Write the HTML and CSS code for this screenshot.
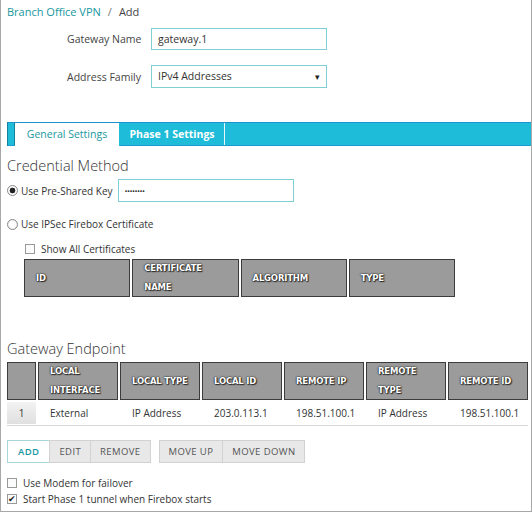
FILE: index.html
```html
<!DOCTYPE html>
<html>
<head>
<meta charset="utf-8">
<link rel="stylesheet" href="styles.css">
</head>
<body>
<div class="page">
  <div class="crumbs"><a class="crumb-link">Branch Office VPN</a><span class="sep">/</span><span class="crumb-cur">Add</span></div>

  <div class="form">
    <div class="form-row">
      <label class="form-label">Gateway Name</label>
      <div class="field">gateway.1</div>
    </div>
    <div class="form-row row2">
      <label class="form-label">Address Family</label>
      <div class="field select">IPv4 Addresses<span class="caret">▾</span></div>
    </div>
  </div>

  <div class="tabs">
    <div class="tab-lead"></div>
    <div class="tab active">General Settings</div>
    <div class="tab">Phase 1 Settings</div>
    <div class="tab-rest"></div>
  </div>

  <h2 class="section-title first">Credential Method</h2>
  <div class="opt-row psk">
    <span class="radio checked"></span><span class="opt-label">Use Pre-Shared Key</span>
    <div class="field pwd">••••••••</div>
  </div>
  <div class="opt-row ipsec">
    <span class="radio"></span><span class="opt-label">Use IPSec Firebox Certificate</span>
  </div>
  <div class="opt-row showall">
    <span class="check"></span><span class="opt-label">Show All Certificates</span>
  </div>

  <div class="grid cert-grid">
    <div class="th">ID</div>
    <div class="th">CERTIFICATE<br>NAME</div>
    <div class="th">ALGORITHM</div>
    <div class="th">TYPE</div>
  </div>

  <h2 class="section-title second">Gateway Endpoint</h2>
  <div class="grid ep-grid">
    <div class="th"></div>
    <div class="th">LOCAL<br>INTERFACE</div>
    <div class="th">LOCAL TYPE</div>
    <div class="th">LOCAL ID</div>
    <div class="th">REMOTE IP</div>
    <div class="th">REMOTE<br>TYPE</div>
    <div class="th">REMOTE ID</div>
  </div>
  <div class="grid ep-grid ep-row">
    <div class="td idx">1</div>
    <div class="td">External</div>
    <div class="td">IP Address</div>
    <div class="td">203.0.113.1</div>
    <div class="td">198.51.100.1</div>
    <div class="td">IP Address</div>
    <div class="td">198.51.100.1</div>
  </div>

  <div class="buttons">
    <div class="btn-group">
      <button class="btn primary">ADD</button><button class="btn">EDIT</button><button class="btn">REMOVE</button>
    </div>
    <div class="btn-group">
      <button class="btn">MOVE UP</button><button class="btn">MOVE DOWN</button>
    </div>
  </div>

  <div class="checks">
    <div class="opt-row"><span class="check"></span><span class="opt-label">Use Modem for failover</span></div>
    <div class="opt-row"><span class="check checked">✔</span><span class="opt-label">Start Phase 1 tunnel when Firebox starts</span></div>
  </div>
</div>
</body>
</html>
```

FILE: styles.css
```css
* { box-sizing: border-box; }
html, body { margin: 0; padding: 0; background: #fff; }
body {
  font-family: "Open Sans", "Liberation Sans", sans-serif;
  font-size: 10px;
  color: #333;
}
.page {
  width: 532px;
  height: 512px;
  border-left: 1px solid #a8a8a8;
  border-right: 1px solid #a8a8a8;
  border-bottom: 1px solid #a8a8a8;
  padding: 4px 0 0 6px;
  overflow: hidden;
}
.crumbs { line-height: 16px; font-size: 11px; }
.crumb-link { color: #17979f; }
.sep { color: #777; margin: 0 7px; }
.crumb-cur { color: #444; }

.form { margin-top: 8px; }
.form-row { display: flex; align-items: center; height: 22px; }
.form-row.row2 { margin-top: 15px; height: 23px; }
.form-label { width: 84px; margin-left: 60px; color: #444; font-size: 10.5px; }
.field {
  width: 176px;
  height: 22px;
  border: 1px solid #7fd0d6;
  padding: 0 6px;
  line-height: 20px;
  color: #333;
  background: #fff;
  font-size: 10.5px;
}
.select { height: 23px; line-height: 21px; display: flex; justify-content: space-between; }
.caret { font-size: 9px; color: #222; }

.tabs {
  margin-top: 34px;
  height: 24px;
  display: flex;
  background: #1ebcd8;
  border-top: 1px solid #1a92cf;
  border-bottom: 1px solid #1a9ccf;
  border-left: 1px solid #13829a;
  margin-right: -1px;
}
.tab-lead { width: 7px; border-right: 1px solid #13829a; }
.tab {
  width: 105px;
  text-align: center;
  line-height: 22px;
  color: #fff;
  font-weight: 700;
  font-size: 10.5px;
  border-right: 1px solid #e8f7fa;
}
.tab.active {
  background: #fff;
  color: #1a979f;
  font-weight: 400;
  margin-bottom: -1px;
  border-right: 1px solid #1ebcd8;
}
.tab-rest { flex: 1; }

.section-title {
  font-weight: 300;
  font-size: 14.5px;
  line-height: 22px;
  margin: 0;
  color: #333;
}
.section-title.first { margin-top: 9px; }
.section-title.second { margin-top: 41px; }

.opt-row { display: flex; align-items: center; height: 16px; font-size: 10px; }
.opt-row.psk { margin-top: 2px; height: 23px; }
.opt-row.ipsec { margin-top: 14px; }
.opt-row.showall { margin-top: 9px; padding-left: 18px; }
.opt-label { color: #333; }
.psk .field { width: 176px; margin-left: 5px; font-size: 8px; letter-spacing: -0.5px; height: 23px; line-height: 21px; }

.radio {
  width: 11px; height: 11px;
  border-radius: 50%;
  border: 1px solid #888;
  background: radial-gradient(circle, #fff 40%, #e4e4e4 100%);
  margin-right: 3px;
}
.radio.checked { background: radial-gradient(circle, #222 0, #222 2.6px, #fff 3.2px, #fff 4px, #ddd 100%); }
.check {
  width: 10px; height: 10px;
  border: 1px solid #999;
  background: #fbfbfb;
  margin-right: 6px;
  font-size: 9px;
  line-height: 8px;
  text-align: center;
  color: #222;
}

.grid { display: grid; column-gap: 2px; }
.cert-grid {
  margin-top: 2px;
  margin-left: 17px;
  width: 431px;
  grid-template-columns: repeat(4, 1fr);
}
.th {
  background: #9b9b9b;
  border: 1px solid #3c3c3c;
  height: 38px;
  display: flex;
  align-items: center;
  padding-left: 11px;
  font-family: "DejaVu Sans", Verdana, sans-serif;
  font-weight: 700;
  font-size: 8.5px;
  line-height: 19px;
  letter-spacing: -0.2px;
  color: #fff;
  text-shadow: 0 0 1px #111, 0 0 2px #222, 1px 1px 1px #333;
}
.ep-grid {
  margin-top: 2px;
  width: 521px;
  grid-template-columns: 29px repeat(6, 1fr);
}
.ep-row {
  margin-top: 2px;
  border-bottom: 1px solid #d6d6d6;
  padding-bottom: 1px;
}
.td {
  height: 22px;
  line-height: 22px;
  padding-left: 12px;
  font-size: 10px;
  color: #333;
}
.td.idx {
  padding-left: 0;
  text-align: center;
  background: linear-gradient(#f2f2f2, #e0e0e0);
}

.buttons { margin-top: 14px; display: flex; gap: 8px; }
.btn-group { display: flex; }
.btn {
  height: 23px;
  border: 1px solid #d2d2d2;
  background: #e8e8e8;
  color: #555;
  font-family: "Open Sans", "Liberation Sans", sans-serif;
  font-size: 9.5px;
  letter-spacing: 0.4px;
  padding: 0 9px;
  margin: 0 0 0 -1px;
}
.btn-group .btn:first-child { margin-left: 0; }
.btn.primary { background: #fff; color: #17979f; border-color: #a9d6da; font-weight: 600; padding: 0 10px; }

.checks { margin-top: 12px; }
.checks .opt-row { height: 16px; }
```
